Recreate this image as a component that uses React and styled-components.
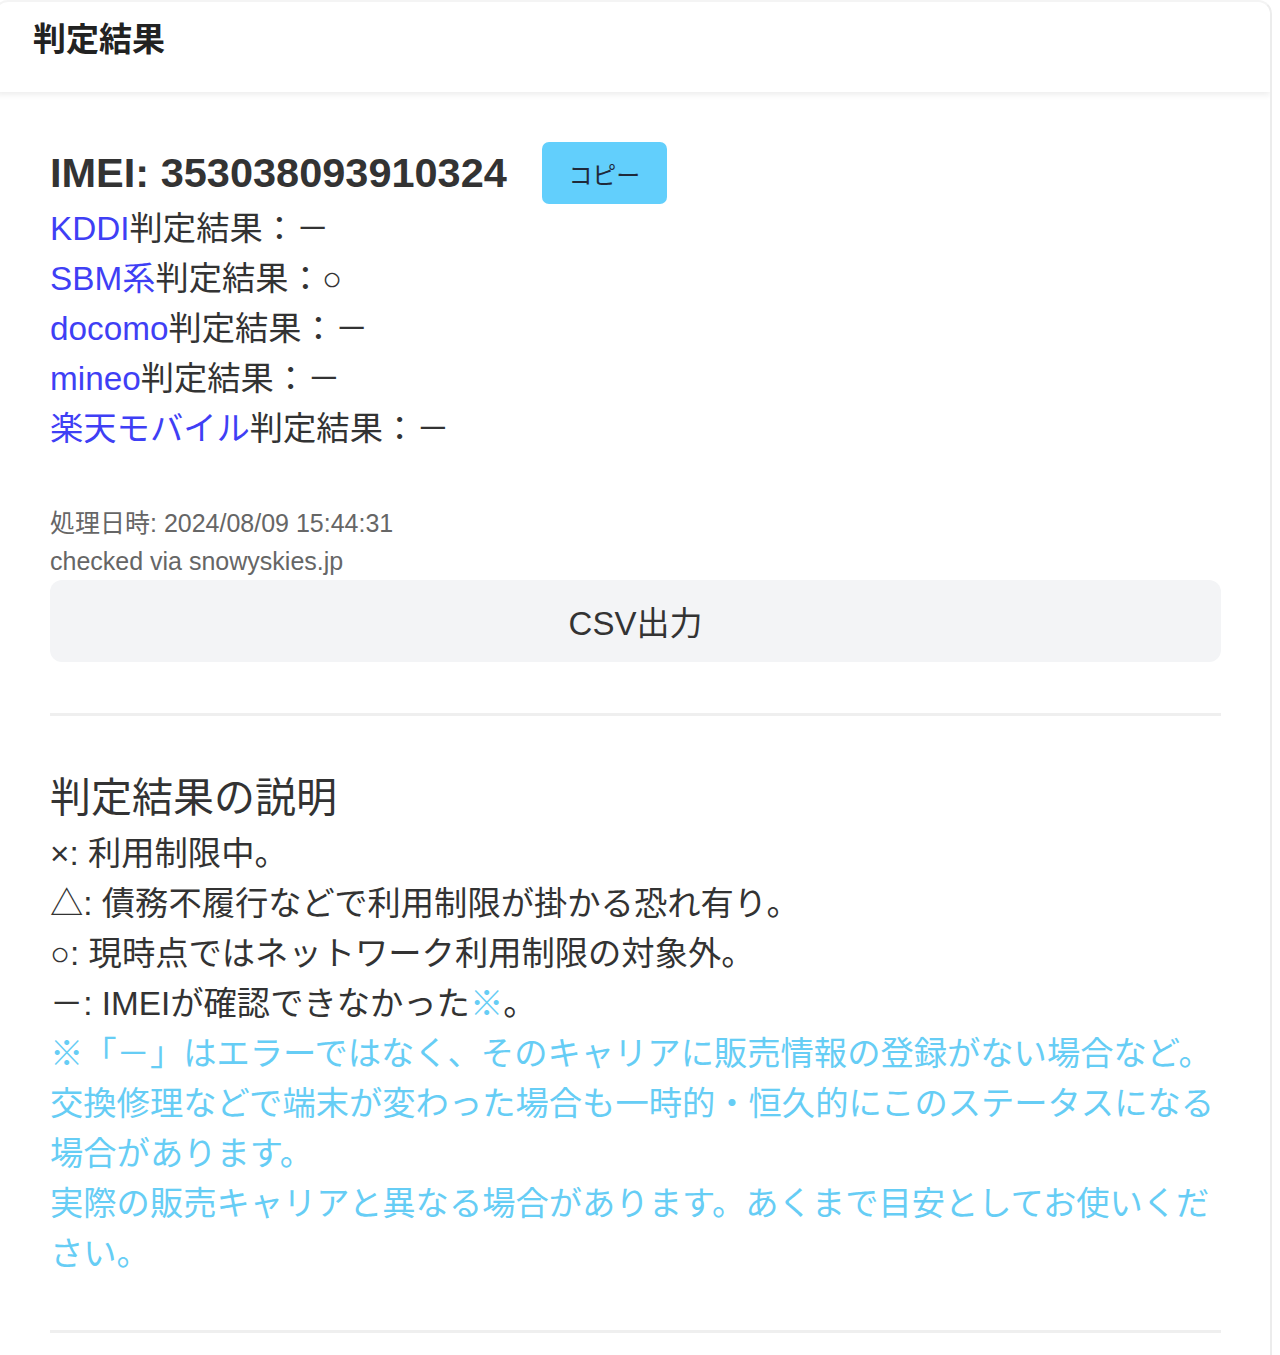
import styled, { createGlobalStyle } from "styled-components";

const GlobalStyle = createGlobalStyle`
  body {
    margin: 0;
    background: #ffffff;
    font-family: "Liberation Sans", "Noto Sans CJK JP", sans-serif;
    color: #333;
  }
`;

const Card = styled.div`
  margin-left: -6px;
  width: 1278px;
  box-sizing: border-box;
  background: #fff;
  border: 2px solid #ececec;
  border-top-color: #f4f4f4;
  border-radius: 14px;
  overflow: hidden;
`;

const CardHeader = styled.div`
  position: relative;
  z-index: 1;
  height: 90px;
  box-sizing: border-box;
  padding: 18px 0 0 37px;
  box-shadow: 0 3px 6px rgba(0, 0, 0, 0.07);
`;

const HeaderTitle = styled.h2`
  margin: 0;
  font-size: 33px;
  line-height: 40px;
  font-weight: 700;
  color: #222;
`;

const CardBody = styled.div`
  padding: 50px 49px 60px 54px;
`;

const ImeiRow = styled.div`
  display: flex;
  align-items: center;
  gap: 35px;
  height: 62px;
`;

const Imei = styled.span`
  font-size: 41.5px;
  font-weight: 700;
  color: #333;
`;

const CopyButton = styled.button`
  width: 125px;
  height: 62px;
  border: none;
  border-radius: 7px;
  background: #62cffc;
  color: #1f2a3a;
  font-family: inherit;
  font-size: 24px;
  cursor: pointer;
`;

const ResultLine = styled.div`
  font-size: 33.3px;
  line-height: 50px;
  color: #333;
`;

const Carrier = styled.span`
  color: #3f3ff5;
`;

const Meta = styled.div`
  margin-top: 50px;
  font-size: 25px;
  line-height: 38px;
  color: #666;
`;

const CsvButton = styled.button`
  display: block;
  width: 100%;
  height: 82px;
  border: none;
  border-radius: 12px;
  background: #f3f4f6;
  color: #333;
  font-family: inherit;
  font-size: 33px;
  cursor: pointer;
`;

const Divider = styled.hr`
  border: none;
  height: 3px;
  background: #efefef;
  margin: 51px 0;
`;

const SectionTitle = styled.h3`
  margin: 0;
  font-size: 41px;
  line-height: 62px;
  font-weight: 400;
  color: #333;
`;

const Legend = styled.div`
  font-size: 33.3px;
  line-height: 50px;
  color: #333;
`;

const Note = styled.span`
  color: #66cdf5;
`;

const NoteBlock = styled.div`
  font-size: 33.3px;
  line-height: 50px;
  color: #66cdf5;
`;

const carriers = [
  { name: "KDDI", result: "－" },
  { name: "SBM系", result: "○" },
  { name: "docomo", result: "－" },
  { name: "mineo", result: "－" },
  { name: "楽天モバイル", result: "－" },
];

const App = () => {
  return (
    <>
      <GlobalStyle />
      <Card>
        <CardHeader>
          <HeaderTitle>判定結果</HeaderTitle>
        </CardHeader>
        <CardBody>
          <ImeiRow>
            <Imei>IMEI: 353038093910324</Imei>
            <CopyButton>コピー</CopyButton>
          </ImeiRow>
          {carriers.map((c) => (
            <ResultLine key={c.name}>
              <Carrier>{c.name}</Carrier>判定結果：{c.result}
            </ResultLine>
          ))}

          <Meta>
            処理日時: 2024/08/09 15:44:31
            <br />
            checked via snowyskies.jp
          </Meta>
          <CsvButton>CSV出力</CsvButton>

          <Divider />

          <SectionTitle>判定結果の説明</SectionTitle>
          <Legend>×: 利用制限中。</Legend>
          <Legend>△: 債務不履行などで利用制限が掛かる恐れ有り。</Legend>
          <Legend>○: 現時点ではネットワーク利用制限の対象外。</Legend>
          <Legend>
            －: IMEIが確認できなかった<Note>※</Note>。
          </Legend>
          <NoteBlock>
            ※「－」はエラーではなく、そのキャリアに販売情報の登録がない場合など。交換修理などで端末が変わった場合も一時的・恒久的にこのステータスになる場合があります。
          </NoteBlock>
          <NoteBlock>
            実際の販売キャリアと異なる場合があります。あくまで目安としてお使いください。
          </NoteBlock>

          <Divider />
        </CardBody>
      </Card>
    </>
  );
};

export default App;
